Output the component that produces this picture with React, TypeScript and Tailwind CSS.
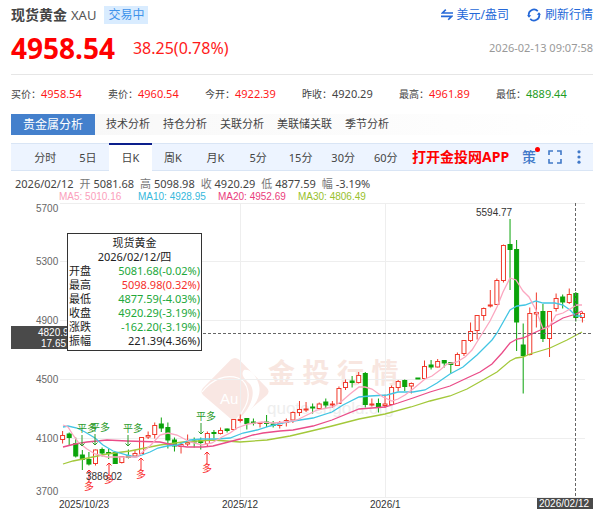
import { useState } from 'react'
import clsx from 'clsx'

const quotes = [
  { label: '买价', value: '4958.54', color: 'text-[#ff1a1a]' },
  { label: '卖价', value: '4960.54', color: 'text-[#ff1a1a]' },
  { label: '今开', value: '4922.39', color: 'text-[#ff1a1a]' },
  { label: '昨收', value: '4920.29', color: 'text-[#444]' },
  { label: '最高', value: '4961.89', color: 'text-[#ff1a1a]' },
  { label: '最低', value: '4889.44', color: 'text-[#1f9d1f]' },
]

const analysisTabs = ['技术分析', '持仓分析', '关联分析', '美联储关联', '季节分析']

const periods = ['分时', '5日', '日K', '周K', '月K', '5分', '15分', '30分', '60分']

const ohlc = [
  ['开', '5081.68'],
  ['高', '5098.98'],
  ['收', '4920.29'],
  ['低', '4877.59'],
  ['幅', '-3.19%'],
]

const tooltipRows = [
  { label: '开盘', value: '5081.68(-0.02%)', color: 'text-[#22a83a]' },
  { label: '最高', value: '5098.98(0.32%)', color: 'text-[#f5302c]' },
  { label: '最低', value: '4877.59(-4.03%)', color: 'text-[#22a83a]' },
  { label: '收盘', value: '4920.29(-3.19%)', color: 'text-[#22a83a]' },
  { label: '涨跌', value: '-162.20(-3.19%)', color: 'text-[#22a83a]' },
  { label: '振幅', value: '221.39(4.36%)', color: 'text-[#222]' },
]

// direction, body top, body bottom, high, low (chart units)
type Candle = ['up' | 'down', number, number, number, number]

const candles: Candle[] = [
  ['up', 435.5, 439.5, 431, 443.5],
  ['down', 434, 437.5, 432.5, 446],
  ['down', 443.5, 456, 437.5, 457.5],
  ['down', 455, 459.5, 450, 470],
  ['down', 459.5, 464, 452, 465.5],
  ['up', 450, 463.5, 449.5, 465.5],
  ['down', 449.5, 453, 447.5, 456.5],
  ['down', 452.5, 453.5, 449, 459],
  ['down', 452.5, 463.5, 452.5, 463.5],
  ['up', 456.5, 462.5, 456, 463.5],
  ['down', 456, 457.5, 449.5, 458.5],
  ['up', 453.5, 456, 450, 456.5],
  ['up', 437.5, 453.5, 437, 454],
  ['up', 435.5, 437, 431.5, 439],
  ['up', 425.5, 434.5, 422.5, 438.5],
  ['down', 424, 428, 417.5, 432],
  ['down', 427.5, 440, 422.5, 448.5],
  ['down', 440, 446, 437.5, 451.5],
  ['up', 444.5, 446.5, 443.5, 453.5],
  ['up', 442.5, 444, 434.5, 446],
  ['down', 441, 442, 437.5, 447.5],
  ['down', 440.5, 442.5, 437.5, 449.5],
  ['up', 433.5, 443.5, 431.5, 446.5],
  ['down', 432.5, 433.5, 430, 438.5],
  ['up', 430.5, 433.5, 427.5, 434.5],
  ['down', 429, 430.5, 428.5, 432.5],
  ['up', 419.5, 429.5, 419, 430],
  ['up', 419.5, 420.5, 414.5, 422.5],
  ['down', 418.5, 423.5, 418.5, 429.5],
  ['down', 422, 423, 418.5, 425.5],
  ['up', 422.5, 423.5, 422, 427.5],
  ['down', 422, 423.5, 415, 427],
  ['down', 424, 425.5, 421, 427.5],
  ['up', 423.5, 425.5, 421, 428.5],
  ['up', 420.5, 422.5, 418.5, 426.5],
  ['up', 412.5, 420, 411.5, 423],
  ['up', 409.5, 412.5, 401, 416],
  ['up', 409, 410, 402, 412],
  ['down', 407, 408, 403.5, 413.5],
  ['up', 404, 408.5, 402.5, 409],
  ['down', 402, 405, 398.5, 408],
  ['up', 404, 405, 401, 408],
  ['up', 388.5, 403.5, 386.5, 404],
  ['up', 382.5, 387.5, 379.5, 390],
  ['down', 381, 382.5, 376, 387.5],
  ['up', 375.5, 382.5, 372, 383.5],
  ['down', 373.5, 404.5, 372, 407.5],
  ['up', 404, 405, 398.5, 406.5],
  ['down', 403.5, 406.5, 398.5, 412.5],
  ['up', 404, 405.5, 394.5, 408],
  ['up', 387.5, 404.5, 385.5, 405],
  ['up', 381.5, 387.5, 380, 391.5],
  ['down', 380.5, 386.5, 379.5, 391],
  ['up', 383.5, 386, 382.5, 393.5],
  ['down', 378, 379, 378, 379],
  ['up', 366.5, 378.5, 360.5, 379.5],
  ['down', 365, 367, 360, 369.5],
  ['up', 361.5, 367, 359, 367.5],
  ['down', 360.5, 363, 360, 367.5],
  ['down', 362.5, 364.5, 362, 373.5],
  ['up', 354.5, 365.5, 352.5, 366],
  ['up', 340.5, 353.5, 340, 356],
  ['up', 331.5, 340.5, 322.5, 342],
  ['up', 315.5, 330.5, 315, 339.5],
  ['up', 308.5, 315.5, 307.5, 320.5],
  ['up', 305, 306, 290, 307.5],
  ['up', 280.5, 304.5, 278.5, 305],
  ['up', 245.5, 280.5, 244.5, 282.5],
  ['down', 244.5, 249.5, 219, 290],
  ['down', 249.5, 322, 240, 351],
  ['down', 345, 355.5, 323.5, 393.5],
  ['up', 313.5, 354.5, 307.5, 355.5],
  ['up', 312.5, 314, 292.5, 327.5],
  ['down', 311.5, 338.5, 304, 342],
  ['up', 311.5, 338.5, 311, 357],
  ['up', 298.5, 308.5, 293.5, 311.5],
  ['down', 297, 302, 294.5, 308.5],
  ['up', 294.5, 302.5, 288.5, 304],
  ['down', 293.5, 317.5, 292, 321.5],
  ['up', 313.5, 317.5, 311.5, 322.5],
]

const movingAverages = [
  {
    color: '#a3c83a',
    points:
      '63,464 73,461 88,458 107,454 130,451 150,447 160,445 183,442 213,440 240,442 267,440 290,436 307,432 332,426 359,419 385,414 411,407 430,401 450,396 467,389 483,380 497,372 510,361 516,358 523,357 530,354 550,348 567,340 582,332',
  },
  {
    color: '#ea4c88',
    points:
      '63,447 75,444 87,442 107,440 127,441 160,442 173,445 187,447 203,447 213,446 240,439 253,435 263,433 280,431 293,430 313,426 332,420 359,409 385,407 398,403 413,398 430,392 450,386 467,378 480,372 492,364 502,353 510,343 517,339 523,338 536,332 549,326 563,318 576,314 582,311',
  },
  {
    color: '#42c5e3',
    points:
      '63,427 68,426 77,428 85,432 95,438 103,445 113,451 127,455 135,457 142,455 150,452 158,448 167,446 177,445 190,440 202,439 217,439 230,438 243,433 257,430 270,426 287,422 300,420 313,418 332,412 343,405 359,397 370,396 387,395 398,392 413,392 425,390 437,383 450,374 463,367 477,355 492,340 497,333 510,310 517,306 525,305 536,301 543,303 555,303 563,305 570,310 576,316 582,316',
  },
  {
    color: '#fba7c0',
    points:
      '63,425 68,427 73,435 78,442 87,449 95,454 107,457 137,457 146,449 150,446 160,435 168,433 177,435 190,442 202,445 212,443 222,437 230,433 237,428 248,424 262,422 273,423 287,422 297,420 307,415 317,410 327,408 333,407 342,401 350,394 359,387 365,387 372,389 383,397 392,401 398,399 405,395 413,389 425,379 432,376 440,370 447,364 457,362 465,357 472,350 477,342 490,321 497,307 503,292 510,278 516,280 523,291 529,297 536,310 543,329 549,327 556,315 563,313 570,309 577,305 582,305',
  },
]

const gridLines = [
  { y: 203.5, label: '5700', labelY: 212 },
  { y: 261.5, label: '5300', labelY: 265 },
  { y: 320.5, label: '4900', labelY: 324 },
  { y: 379.5, label: '4500', labelY: 383 },
  { y: 438.5, label: '4100', labelY: 442 },
  { y: 497.5, label: '3700', labelY: 495 },
]

const closeSignals = [
  { x: 82, y: 432 },
  { x: 95, y: 431 },
  { x: 128, y: 432 },
  { x: 201, y: 420 },
]

const longSignals = [
  { x: 89, y: 470 },
  { x: 109, y: 463 },
  { x: 141, y: 458 },
  { x: 207, y: 452 },
]

const candleX = (i: number) => 62.6 + i * 6.58

function SwapIcon() {
  return (
    <svg className="h-3 w-3" viewBox="0 0 12 12" fill="none" stroke="currentColor" strokeWidth={1.6}>
      <path d="M12 4H1.4L4.8.6M0 7.4h10.6L7.2 10.8" />
    </svg>
  )
}

function RefreshIcon() {
  return (
    <svg className="h-[14px] w-[14px]" viewBox="0 0 14 14" fill="none" stroke="currentColor" strokeWidth={1.7}>
      <path d="M2 8.2A5.2 5.2 0 0 1 10.8 3.2M12 5.8A5.2 5.2 0 0 1 3.2 10.8" />
      <path d="M0 7.2h4.2L2 9.8zM9.8 6.8H14L12 4.2z" fill="currentColor" stroke="none" />
    </svg>
  )
}

function ExpandIcon() {
  return (
    <svg className="h-[14px] w-[14px]" viewBox="0 0 14 14" fill="none" stroke="currentColor" strokeWidth={1.6}>
      <path d="M1 5V1h4M9 1h4v4M13 9v4H9M5 13H1V9" />
    </svg>
  )
}

function DotsIcon() {
  return (
    <svg className="h-[14px] w-1" viewBox="0 0 4 14" fill="currentColor">
      <circle cx="2" cy="1.8" r="1.6" />
      <circle cx="2" cy="7" r="1.6" />
      <circle cx="2" cy="12.2" r="1.6" />
    </svg>
  )
}

function Watermark() {
  return (
    <g>
      <path
        d="M231 359.5q4-3 8 0L267 388q3 3.500 0 7L239 419q-4 3-8 0L203 395q-3-3.500 0-7z"
        fill="#f9e7e3"
      />
      {/* swirl that cuts the coin out of the diamond */}
      <path
        d="M244 370C240 375 245 379 250 384C256 392 252 407 239 419C256 408 263 394 258 382C255 374 250 369 244 370z"
        fill="#fff"
      />
      <path
        d="M202 392C212 379 226 374 238 378C250 383 250 398 245 407C242 413 239 417 236 420"
        fill="none"
        stroke="#fff"
        strokeWidth={1.2}
      />
      <text x="220" y="404" fontSize="15" fill="#fff">
        Au
      </text>
      <text x="268" y="383" fontSize="27" fontWeight="700" fill="#f8e6e0">
        金 投 行 情
      </text>
      <text x="267" y="414" fontSize="17" fill="#eeeeee">
        quote.cngold.org
      </text>
    </g>
  )
}

function KLineChart() {
  return (
    <svg
      className="block w-full font-['Liberation_Sans','Noto_Sans_CJK_SC',sans-serif]"
      viewBox="0 203 600 306"
      fontSize="10"
    >
      <Watermark />

      {/* Grid */}
      {gridLines.map((g) => (
        <g key={g.label}>
          <line x1="60" x2="585" y1={g.y} y2={g.y} stroke="#eeeeee" />
          <text x="36" y={g.labelY} fill="#666">
            {g.label}
          </text>
        </g>
      ))}
      <line x1="240.5" x2="240.5" y1="203" y2="497" stroke="#eeeeee" />
      <line x1="385.5" x2="385.5" y1="203" y2="497" stroke="#eeeeee" />

      {/* Candles */}
      {candles.map(([dir, top, bottom, high, low], i) => {
        const x = candleX(i)
        const up = dir === 'up'
        return (
          <g key={i} stroke={up ? '#f0392b' : '#0aa30a'}>
            <path d={`M${x} ${high}V${top}M${x} ${bottom}V${low}`} strokeWidth={1} />
            <rect
              x={x - 2}
              y={top}
              width={4}
              height={bottom - top}
              fill={up ? '#fff' : '#0aa30a'}
            />
          </g>
        )
      })}

      {movingAverages.map((ma) => (
        <polyline key={ma.color} points={ma.points} fill="none" stroke={ma.color} strokeWidth={1.3} />
      ))}

      {/* Signals */}
      {closeSignals.map((s) => (
        <g key={s.x} fill="#2a9a2a" stroke="none">
          <text x={s.x - 5} y={s.y}>
            平多
          </text>
          <path d={`M${s.x} ${s.y + 3}v11m-2.5 -2.5l2.5 2.5l2.5 -2.5`} fill="none" stroke="#2a9a2a" />
        </g>
      ))}
      {longSignals.map((s) => (
        <g key={s.x} fill="#fa2a2a">
          <path d={`M${s.x} ${s.y + 12}v-12m-2.5 2.5l2.5 -2.5l2.5 2.5`} fill="none" stroke="#fa2a2a" />
          <text x={s.x - 5} y={s.y + 20}>
            多
          </text>
        </g>
      ))}
      <text x="86" y="480" fill="#333">
        3886.02
      </text>
      <text x="476" y="216" fill="#333">
        5594.77
      </text>

      {/* Crosshair */}
      <path d="M575.5 203V498M68 333.5H593" stroke="#666" strokeDasharray="3 2" fill="none" />
      <rect x="11" y="326" width="57" height="23" fill="#4a4a4a" />
      <text x="38" y="336" fill="#fff">
        4820.95
      </text>
      <text x="41" y="347" fill="#fff">
        17.65
      </text>

      {/* Dates */}
      <g fill="#333">
        <text x="59" y="508">
          2025/10/23
        </text>
        <text x="222" y="508">
          2025/12
        </text>
        <text x="370" y="508">
          2026/1
        </text>
      </g>
      <rect x="537" y="498" width="56" height="11" fill="#4a4a4a" />
      <text x="539" y="507" fill="#fff">
        2026/02/12
      </text>
    </svg>
  )
}

function ChartTooltip() {
  return (
    <div className="absolute top-[30px] left-[67px] w-[135px] border border-[#333] bg-white px-px py-0.5 text-[11px] leading-[14px] text-[#222]">
      <p className="text-center">现货黄金</p>
      <p className="text-center">2026/02/12/四</p>
      <dl>
        {tooltipRows.map((row) => (
          <div key={row.label} className="flex justify-between">
            <dt>{row.label}</dt>
            <dd className={row.color}>{row.value}</dd>
          </div>
        ))}
      </dl>
    </div>
  )
}

export default function App() {
  const [period, setPeriod] = useState('日K')

  return (
    <div className="bg-white font-['Noto_Sans','Noto_Sans_CJK_SC',sans-serif] text-[#444]">
      <div className="pr-[7px] pl-[11px]">
        {/* Header */}
        <header className="border-b border-[#e6e6e6] pt-1.5 pb-2.5">
          <div className="flex h-[18px] items-center">
            <h1 className="text-[14px] leading-[18px] font-bold">现货黄金</h1>
            <span className="ml-1 text-[13px] leading-[18px] text-[#555]">XAU</span>
            <span className="ml-2 bg-[#d9ecff] px-1 text-[12px] leading-[18px] text-[#3f93ea]">交易中</span>
            <div className="ml-auto flex items-center gap-[18px] text-[12px] leading-[18px] text-[#2468d8]">
              <button type="button" className="flex items-center gap-1">
                <SwapIcon />
                美元/盎司
              </button>
              <button type="button" className="flex items-center gap-1">
                <RefreshIcon />
                刷新行情
              </button>
            </div>
          </div>
          <div className="mt-2 flex h-8 items-center">
            <strong className="text-[28px] leading-8 font-bold text-[#ff0000]">4958.54</strong>
            <span className="ml-[18px] text-[16px] leading-8 text-[#ff1a1a]">38.25(0.78%)</span>
            <time className="ml-auto text-[11px] text-[#999]">2026-02-13 09:07:58</time>
          </div>
        </header>

        <dl className="mt-3 grid grid-cols-6 text-[11px] leading-[14px]">
          {quotes.map((q) => (
            <div key={q.label} className="flex">
              <dt className="text-[10px]">{q.label}：</dt>
              <dd className={q.color}>{q.value}</dd>
            </div>
          ))}
        </dl>

        {/* Analysis tabs */}
        <nav className="mt-[13px] flex h-[21px] items-center bg-gradient-to-r from-[#f7f7f7] to-white text-[11px]">
          <a href="#" className="mr-[11px] bg-[#4480cc] px-3 text-[12px] leading-[21px] text-white">
            贵金属分析
          </a>
          <div className="flex gap-[13px]">
            {analysisTabs.map((tab) => (
              <a key={tab} href="#">
                {tab}
              </a>
            ))}
          </div>
        </nav>

        {/* Period bar */}
        <div className="mt-2 flex h-7 items-center border-y border-[#d9e5f5] bg-[#edf4ff] pl-[13px] text-[11px]">
          <div className="-my-px grid h-7 w-[383px] grid-cols-9">
            {periods.map((p) => (
              <button
                key={p}
                type="button"
                onClick={() => setPeriod(p)}
                className={clsx(
                  'border-t-2',
                  p === period ? 'border-t-[#0c1f8c] bg-white' : 'border-t-transparent',
                )}
              >
                {p}
              </button>
            ))}
          </div>
          <a href="#" className="ml-[5px] text-[14px] leading-5 font-bold whitespace-nowrap text-[#ff0000]">
            打开金投网APP
          </a>
          <div className="ml-auto flex items-center text-[#4078c8]">
            <button type="button" className="relative text-[14px] leading-5 font-medium">
              策
              <span className="absolute top-0 -right-1 h-[5px] w-[5px] rounded-full bg-[#ff0000]" />
            </button>
            <button type="button" aria-label="全屏" className="ml-3">
              <ExpandIcon />
            </button>
            <button type="button" aria-label="更多" className="mr-3 ml-[15px]">
              <DotsIcon />
            </button>
          </div>
        </div>
      </div>

      {/* Chart */}
      <div className="mt-[5px] flex gap-1.5 pl-[15px] text-[11px] leading-[15px]">
        <span>2026/02/12</span>
        {ohlc.map(([label, value]) => (
          <span key={label}>
            <span className="text-[#777]">{label}</span> {value}
          </span>
        ))}
      </div>
      <div className="flex w-[398px] pl-[59px] font-['Liberation_Sans',sans-serif] text-[10px] leading-3 whitespace-nowrap">
        <span className="w-[79px] shrink-0 text-[#fba0bb]">MA5: 5010.16</span>
        <span className="w-20 shrink-0 text-[#35b8dc]">MA10: 4928.95</span>
        <span className="w-20 shrink-0 text-[#ea3c7c]">MA20: 4952.69</span>
        <span className="w-20 shrink-0 text-[#98bf2c]">MA30: 4806.49</span>
      </div>
      <div className="relative">
        <KLineChart />
        <ChartTooltip />
      </div>
    </div>
  )
}
